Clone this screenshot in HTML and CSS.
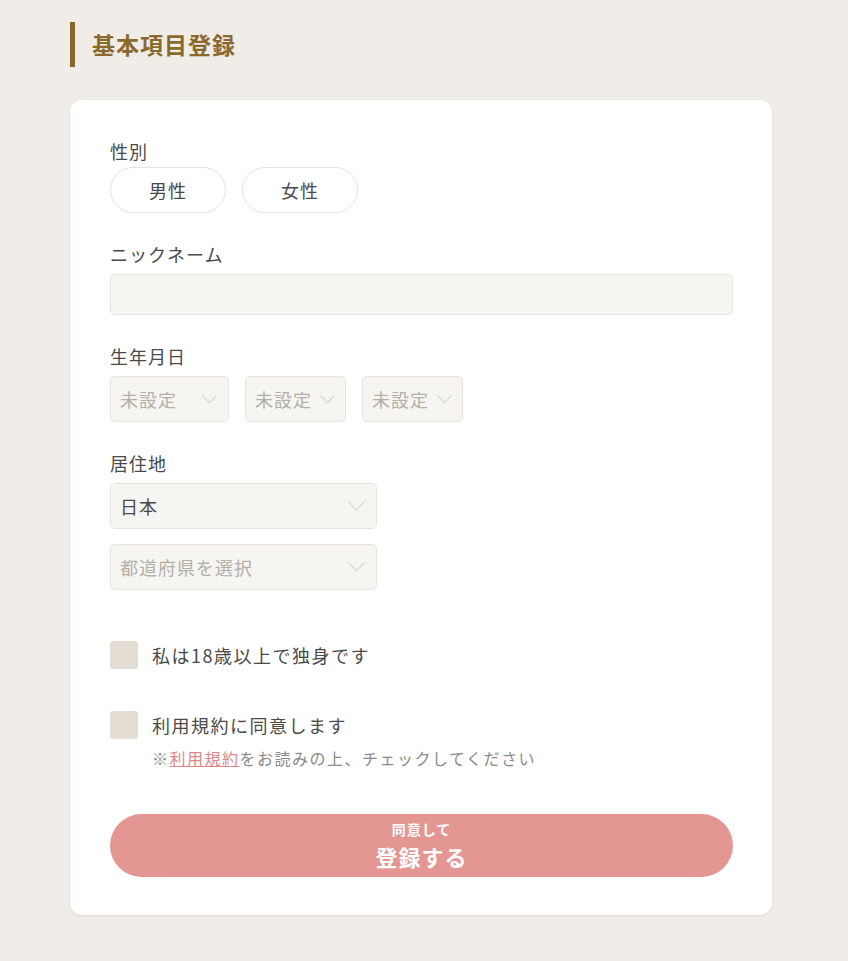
FILE: index.html
```html
<!DOCTYPE html>
<html lang="ja">
<head>
<meta charset="UTF-8">
<meta name="viewport" content="width=device-width, initial-scale=1.0">
<title>基本項目登録</title>
<link rel="stylesheet" href="styles.css">
</head>
<body>
<div class="page">
  <h1 class="title">基本項目登録</h1>
  <form class="card">
    <div class="field">
      <div class="label">性別</div>
      <div class="gender">
        <button type="button" class="pill">男性</button>
        <button type="button" class="pill">女性</button>
      </div>
    </div>

    <div class="field">
      <div class="label">ニックネーム</div>
      <input type="text" class="text-input">
    </div>

    <div class="field">
      <div class="label">生年月日</div>
      <div class="birth">
        <div class="select year">未設定<svg class="chev" width="15" height="9" viewBox="0 0 15 9"><polyline points="0.5,0.5 7.5,8 14.5,0.5" /></svg></div>
        <div class="select small">未設定<svg class="chev" width="15" height="9" viewBox="0 0 15 9"><polyline points="0.5,0.5 7.5,8 14.5,0.5" /></svg></div>
        <div class="select small">未設定<svg class="chev" width="15" height="9" viewBox="0 0 15 9"><polyline points="0.5,0.5 7.5,8 14.5,0.5" /></svg></div>
      </div>
    </div>

    <div class="field last">
      <div class="label">居住地</div>
      <div class="select wide filled">日本<svg class="chev" width="17" height="10" viewBox="0 0 17 10"><polyline points="0.5,0.5 8.5,9 16.5,0.5" /></svg></div>
      <div class="select wide">都道府県を選択<svg class="chev" width="17" height="10" viewBox="0 0 17 10"><polyline points="0.5,0.5 8.5,9 16.5,0.5" /></svg></div>
    </div>

    <div class="check first">
      <span class="box"></span>
      <span class="check-text">私は18歳以上で独身です</span>
    </div>

    <div class="check second">
      <span class="box"></span>
      <span class="check-text">利用規約に同意します</span>
    </div>
    <p class="note">※<a href="#">利用規約</a>をお読みの上、チェックしてください</p>

    <button type="button" class="submit">
      <span class="sub-small">同意して</span>
      <span class="sub-big">登録する</span>
    </button>
  </form>
</div>
</body>
</html>
```

FILE: styles.css
```css
body {
  margin: 0;
  background-color: #f0ede8;
  font-family: "Noto Sans CJK JP", "Noto Sans", sans-serif;
  color: #4a4a4a;
  letter-spacing: 1px;
}

.page {
  width: 702px;
  margin-left: 70px;
  padding-top: 22px;
  padding-bottom: 46px;
}

.title {
  margin: 0 0 33px 0;
  padding-left: 17px;
  border-left: 5px solid #8a6a2c;
  height: 45px;
  line-height: 45px;
  font-size: 23px;
  font-weight: bold;
  color: #8a6a2c;
}

.card {
  background-color: #fff;
  border-radius: 12px;
  box-shadow: 0 1px 3px rgba(0, 0, 0, 0.08);
  padding: 39px 39px 38px 40px;
}

.field {
  margin-bottom: 29px;
}

.field.last {
  margin-bottom: 0;
}

.label {
  font-size: 18px;
  line-height: 24px;
  margin-bottom: 8px;
}

.gender {
  display: flex;
  gap: 16px;
  margin-top: -4px;
}

.pill {
  width: 116px;
  height: 46px;
  border: 1px solid #e6e2dc;
  border-radius: 23px;
  background-color: #fff;
  font-family: inherit;
  font-size: 18px;
  letter-spacing: 1px;
  color: #4a4a4a;
}

.text-input {
  display: block;
  box-sizing: border-box;
  width: 100%;
  height: 41px;
  background-color: #f7f5f1;
  border: 1px solid #e8e4dc;
  border-radius: 5px;
}

.birth {
  display: flex;
  gap: 16px;
}

.select {
  box-sizing: border-box;
  display: flex;
  align-items: center;
  justify-content: space-between;
  height: 46px;
  padding: 0 11px 0 9px;
  background-color: #f7f5f1;
  border: 1px solid #e8e4dc;
  border-radius: 5px;
  font-size: 18px;
  color: #b3afa9;
}

.select.year {
  width: 119px;
}

.select.small {
  width: 101px;
  padding-right: 10px;
}

.select.wide {
  width: 267px;
  margin-bottom: 15px;
}

.select.wide:last-child {
  margin-bottom: 0;
}

.select.filled {
  color: #4a4a4a;
}

.chev polyline {
  fill: none;
  stroke: #cbc7c1;
  stroke-width: 1;
}

.check {
  display: flex;
  align-items: center;
  gap: 14px;
  font-size: 18px;
  letter-spacing: 1.5px;
}

.check.first {
  margin-top: 51px;
  margin-bottom: 42px;
}

.box {
  width: 28px;
  height: 28px;
  border-radius: 3px;
  background-color: #e3ddd3;
}

.note {
  margin: 9px 0 46px 42px;
  font-size: 16px;
  line-height: 20px;
  letter-spacing: 1.5px;
  color: #8a8a8a;
}

.note a {
  color: #e0878a;
}

.submit {
  width: 100%;
  height: 63px;
  border: none;
  border-radius: 32px;
  background-color: #e49693;
  color: #fff;
  font-family: inherit;
  font-weight: bold;
  letter-spacing: 1px;
  display: flex;
  flex-direction: column;
  align-items: center;
  justify-content: center;
}

.sub-small {
  font-size: 14px;
  line-height: 18px;
  margin-bottom: 3px;
}

.sub-big {
  font-size: 22px;
  line-height: 30px;
}
```
